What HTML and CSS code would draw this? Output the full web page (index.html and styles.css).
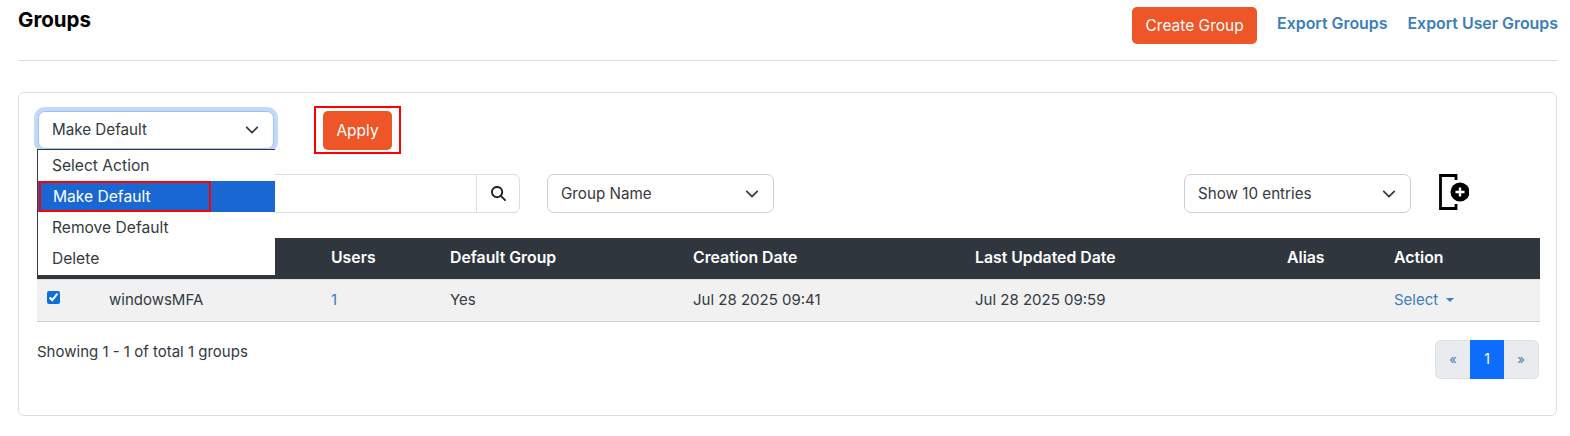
FILE: index.html
```html
<!DOCTYPE html>
<html lang="en">
<head>
<meta charset="utf-8">
<title>Groups</title>
<link rel="stylesheet" href="styles.css">
</head>
<body>
<header class="page-head">
  <h1 class="title">Groups</h1>
  <div class="head-actions">
    <button class="btn btn-create">Create Group</button>
    <a class="export export-a">Export Groups</a>
    <a class="export">Export User Groups</a>
  </div>
</header>
<hr class="rule">
<section class="card">
  <div class="action-row">
    <div class="action-wrap">
      <div class="select select-focus">
        <span>Make Default</span>
        <svg class="chev" viewBox="0 0 16 16"><path d="M2 5l6 6 6-6" fill="none" stroke="#343a40" stroke-width="2" stroke-linecap="round" stroke-linejoin="round"/></svg>
      </div>
      <ul class="menu">
        <li>Select Action</li>
        <li class="menu-active"><span class="redmark">Make Default</span></li>
        <li>Remove Default</li>
        <li>Delete</li>
      </ul>
    </div>
    <div class="apply-mark"><button class="btn btn-apply">Apply</button></div>
  </div>
  <div class="filter-row">
    <div class="search">
      <div class="search-input"></div>
      <div class="search-btn">
        <svg viewBox="0 0 512 512" class="search-icon"><path fill="#212529" d="M416 208c0 45.900-14.900 88.300-40 122.700L502.600 457.400c12.500 12.500 12.500 32.800 0 45.300s-32.800 12.500-45.300 0L330.700 376c-34.400 25.200-76.800 40-122.700 40C93.100 416 0 322.900 0 208S93.100 0 208 0S416 93.100 416 208zM208 352a144 144 0 1 0 0-288 144 144 0 1 0 0 288z"/></svg>
      </div>
    </div>
    <div class="select select-group">
      <span>Group Name</span>
      <svg class="chev" viewBox="0 0 16 16"><path d="M2 5l6 6 6-6" fill="none" stroke="#343a40" stroke-width="2" stroke-linecap="round" stroke-linejoin="round"/></svg>
    </div>
    <div class="select select-show">
      <span>Show 10 entries</span>
      <svg class="chev" viewBox="0 0 16 16"><path d="M2 5l6 6 6-6" fill="none" stroke="#343a40" stroke-width="2" stroke-linecap="round" stroke-linejoin="round"/></svg>
    </div>
    <svg class="add-icon" viewBox="0 0 32 36">
      <path d="M19 6V1.500H3.500v33H19V30" fill="none" stroke="#000" stroke-width="2.800"/>
      <circle cx="23" cy="18" r="9.500" fill="#000"/>
      <path d="M23 13.500v9M18.500 18h9" stroke="#fff" stroke-width="2.400"/>
    </svg>
  </div>
  <table class="grid">
    <thead>
      <tr>
        <th class="c-check"></th>
        <th class="c-name">Group Name</th>
        <th class="c-users">Users</th>
        <th class="c-default">Default Group</th>
        <th class="c-created">Creation Date</th>
        <th class="c-updated">Last Updated Date</th>
        <th class="c-alias">Alias</th>
        <th class="c-action">Action</th>
      </tr>
    </thead>
    <tbody>
      <tr>
        <td><input class="check" type="checkbox" checked></td>
        <td>windowsMFA</td>
        <td><a class="link">1</a></td>
        <td>Yes</td>
        <td>Jul 28 2025 09:41</td>
        <td>Jul 28 2025 09:59</td>
        <td></td>
        <td><a class="link">Select<span class="caret"></span></a></td>
      </tr>
    </tbody>
  </table>
  <div class="table-foot">
    <div class="count">Showing 1 - 1 of total 1 groups</div>
    <nav class="pager">
      <span class="page page-first">«</span>
      <span class="page page-on">1</span>
      <span class="page page-last">»</span>
    </nav>
  </div>
</section>
</body>
</html>
```
FILE: styles.css
```css
* { box-sizing: border-box; }
html, body { margin: 0; padding: 0; }
body {
  width: 1570px;
  height: 436px;
  overflow: hidden;
  background: #fff;
  color: #343a40;
  font-family: "Inter", "Liberation Sans", sans-serif;
  font-size: 15px;
  line-height: 20px;
}
.page-head {
  display: flex;
  justify-content: space-between;
  align-items: flex-start;
  height: 60px;
  padding: 7px 12px 0 18px;
}
.title {
  margin: 3px 0 0;
  font-size: 20.500px;
  line-height: 20px;
  font-weight: 700;
  color: #000;
}
.head-actions { display: flex; align-items: flex-start; }
.btn {
  border: 0;
  border-radius: 5px;
  background: #ee5527;
  color: #fff;
  font-family: inherit;
  font-size: 15.500px;
  padding: 0;
}
.btn-create { width: 125px; height: 37px; }
.export {
  margin-left: 20px;
  margin-top: 7px;
  color: #3b7dbd;
  font-size: 15.900px;
  font-weight: 600;
  white-space: nowrap;
}
.rule {
  margin: 0 13px 0 18px;
  border: 0;
  border-top: 1px solid #dedede;
}
.card {
  margin: 31px 13px 0 18px;
  height: 324px;
  border: 1px solid #dedede;
  border-radius: 6px;
  padding: 18px 16px 0 18px;
}
.action-row {
  display: flex;
  align-items: flex-start;
}
.action-wrap {
  position: relative;
  width: 238px;
  height: 38px;
}
.select {
  display: flex;
  align-items: center;
  justify-content: space-between;
  height: 39px;
  padding: 0 14px 0 13px;
  border: 1px solid #cfcfcf;
  border-radius: 7px;
  background: #fff;
  font-size: 15.200px;
}
.chev { width: 14px; height: 14px; }
.select-focus {
  margin-left: 1px;
  width: 236px;
  height: 38px;
  border-color: #9fc2f5;
  box-shadow: 0 0 0 4px #c3d9fb;
}
.menu {
  position: absolute;
  left: 0;
  top: 38px;
  z-index: 3;
  width: 238px;
  height: 127px;
  margin: 0;
  padding: 0;
  list-style: none;
  background: #fff;
  border: 1px solid #3a3a3a;
  border-right: 0;
}
.menu li {
  height: 31px;
  line-height: 31px;
  padding-left: 14px;
  font-size: 15.600px;
}
.menu .menu-active {
  position: relative;
  background: #1967d2;
  color: #fff;
}
.redmark {
  position: absolute;
  left: 1px;
  top: 0;
  width: 172px;
  height: 31px;
  padding-left: 12px;
  border: 2px solid #f00;
  line-height: 27px;
}
.apply-mark {
  margin-left: 39px;
  margin-top: -5px;
  width: 87px;
  height: 48px;
  border: 2px solid #f00;
  padding: 3px 0 0 7px;
}
.btn-apply { display: block; width: 69px; height: 39px; }
.filter-row {
  display: flex;
  align-items: flex-start;
  margin-top: 20px;
  height: 64px;
}
.search {
  display: flex;
  width: 483px;
  height: 39px;
  border: 1px solid #dedede;
  border-radius: 6px;
}
.search-input { flex: 1; }
.search-btn {
  display: flex;
  align-items: center;
  justify-content: center;
  width: 43px;
  border-left: 1px solid #dedede;
}
.search-icon { width: 15px; height: 15px; }
.select-group { margin-left: 27px; width: 227px; }
.select-show { margin-left: 410px; width: 227px; }
.add-icon { margin-left: 26px; width: 32px; height: 36px; }
.grid {
  width: 1503px;
  table-layout: fixed;
  border-collapse: collapse;
}
.grid th {
  height: 41px;
  padding: 0 0 0 10px;
  background: #30363d;
  color: #fff;
  font-size: 15.800px;
  font-weight: 600;
  text-align: left;
  border-bottom: 1px solid #dedede;
}
.grid td {
  height: 42px;
  padding: 0 0 0 10px;
  background: #f1f1f1;
  border-bottom: 1px solid #cfcfcf;
  font-size: 15px;
}
.c-check { width: 62px; }
.c-name { width: 222px; }
.c-users { width: 119px; }
.c-default { width: 243px; }
.c-created { width: 282px; }
.c-updated { width: 312px; }
.c-alias { width: 107px; }
.c-action { width: 156px; }
.check {
  display: block;
  width: 13px;
  height: 13px;
  margin: -6px 0 0 0;
  accent-color: #0a6fdc;
}
.link { color: #3b7dbd; }
.caret {
  display: inline-block;
  margin-left: 8px;
  vertical-align: 3px;
  border-top: 4px solid #3b7dbd;
  border-left: 4px solid transparent;
  border-right: 4px solid transparent;
}
.table-foot {
  display: flex;
  justify-content: space-between;
  align-items: flex-start;
  padding-top: 20px;
}
.count { font-size: 15px; }
.pager {
  display: flex;
  height: 39px;
  margin-top: -2px;
  margin-right: 1px;
}
.page {
  display: flex;
  align-items: center;
  justify-content: center;
  width: 35px;
  background: #e9ecef;
  border: 1px solid #dee2e6;
  color: #4a78a8;
  font-size: 13px;
}
.page-first { border-radius: 6px 0 0 6px; border-right: 0; }
.page-last { border-radius: 0 6px 6px 0; border-left: 0; }
.page-on { width: 34px; background: #0d6efd; border-color: #0d6efd; color: #fff; font-size: 14px; }
```
